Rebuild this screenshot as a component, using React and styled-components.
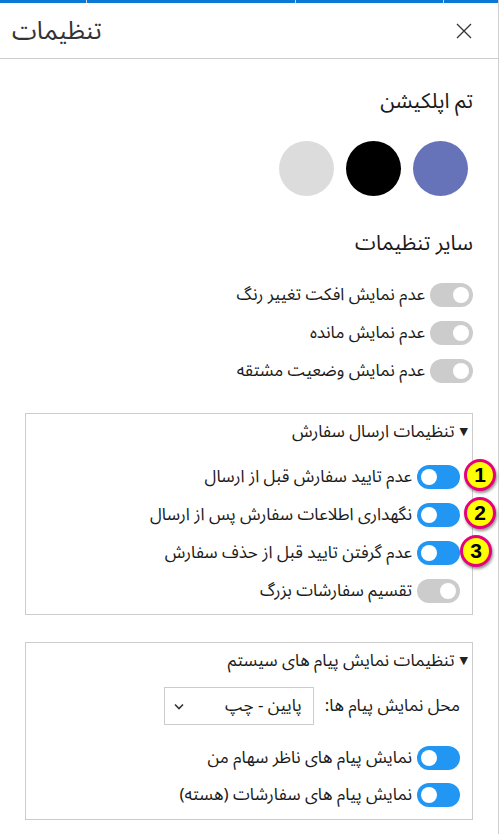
import React from "react";
import styled, { createGlobalStyle } from "styled-components";

const GlobalStyle = createGlobalStyle`
  html, body { margin: 0; padding: 0; background: #fff; }
  body { font-family: "Noto Sans Arabic", "DejaVu Sans", "Noto Sans", sans-serif; color: #1a1a1a; }
  * { box-sizing: border-box; }
`;

const Panel = styled.div`
  width: 499px;
  min-height: 834px;
  border-right: 1px solid #cfcfcf;
  background: #fff;
`;

const TopBar = styled.div`
  display: flex;
  height: 3px;
  background: #0a78d4;
`;

const TopSeg = styled.div`
  width: ${(p) => p.w}px;
  height: 100%;
  border-left: ${(p) => (p.first ? "none" : "1px solid #c9d6e6")};
`;

const Header = styled.div`
  display: flex;
  justify-content: space-between;
  align-items: center;
  height: 56px;
  padding: 0 26px 0 12px;
  border-bottom: 1px solid #cccccc;
`;

const Title = styled.div`
  direction: rtl;
  font-size: 25px;
  color: #333;
`;

const CloseBtn = styled.button`
  border: none;
  background: none;
  padding: 0;
  width: 16px;
  height: 16px;
  display: flex;
  align-items: center;
  justify-content: center;
  cursor: pointer;
`;

const Content = styled.div`
  direction: rtl;
  padding: 28px 25px 0 25px;
  display: flex;
  flex-direction: column;
`;

const Heading = styled.div`
  font-size: 21px;
  line-height: 28px;
  color: #1a1a1a;
  margin-top: ${(p) => p.mt || 0}px;
`;

const ThemeRow = styled.div`
  display: flex;
  gap: 12px;
  padding-right: 5px;
  margin-top: 26px;
`;

const ThemeDot = styled.div`
  width: 55px;
  height: 55px;
  border-radius: 50%;
  background: ${(p) => p.color};
`;

const RowList = styled.div`
  display: flex;
  flex-direction: column;
  gap: ${(p) => p.gap || 14}px;
  margin-top: ${(p) => p.mt || 0}px;
`;

const Row = styled.div`
  position: relative;
  display: flex;
  align-items: center;
  gap: 5px;
  height: 24px;
`;

const Toggle = styled.div`
  position: relative;
  width: 43px;
  height: 24px;
  border-radius: 12px;
  background: ${(p) => (p.on ? "#2196f3" : "#cccccc")};
  flex-shrink: 0;
  &::after {
    content: "";
    position: absolute;
    top: 4px;
    ${(p) => (p.on ? "right: 23px;" : "right: 4px;")}
    width: 16px;
    height: 16px;
    border-radius: 50%;
    background: #fff;
  }
`;

const Label = styled.span`
  font-size: 17px;
  line-height: 24px;
  color: #1a1a1a;
  white-space: nowrap;
`;

const Box = styled.div`
  border: 1px solid #cccccc;
  margin-top: ${(p) => p.mt}px;
  padding: ${(p) => p.pad};
  display: flex;
  flex-direction: column;
`;

const Summary = styled.div`
  display: flex;
  align-items: center;
  gap: 5px;
  margin-right: -8px;
  font-size: 17px;
  line-height: 22px;
  color: #1a1a1a;
`;

const Caret = styled.span`
  font-size: 11px;
  color: #222;
`;

const Badge = styled.div`
  position: absolute;
  top: -6px;
  right: ${(p) => p.r}px;
  width: 32px;
  height: 32px;
  border-radius: 50%;
  background: #ffff00;
  border: 3px solid #e6007e;
  box-shadow: 1px 2px 3px rgba(0, 0, 0, 0.45);
  display: flex;
  align-items: center;
  justify-content: center;
  font-family: "Liberation Sans", Arial, sans-serif;
  font-weight: bold;
  font-size: 21px;
  color: #000;
`;

const SelectRow = styled.div`
  display: flex;
  align-items: center;
  gap: 11px;
  margin-top: 15px;
`;

const SelectBox = styled.div`
  width: 150px;
  height: 38px;
  border: 1px solid #cccccc;
  display: flex;
  align-items: center;
  justify-content: space-between;
  padding: 0 11px 0 9px;
  font-size: 17px;
  color: #1a1a1a;
`;

const Chevron = () => (
  <svg width="10" height="7" viewBox="0 0 10 7">
    <path d="M1 1.5 L5 5.5 L9 1.5" fill="none" stroke="#333" strokeWidth="1.6" />
  </svg>
);

const XIcon = () => (
  <svg width="16" height="16" viewBox="0 0 16 16">
    <path d="M1 1 L15 15 M15 1 L1 15" stroke="#333" strokeWidth="1.3" />
  </svg>
);

const ToggleRow = ({ on, label, badge, badgeR }) => (
  <Row>
    <Toggle on={on} />
    <Label>{label}</Label>
    {badge && <Badge r={badgeR}>{badge}</Badge>}
  </Row>
);

export default function App() {
  return (
    <>
      <GlobalStyle />
      <Panel>
        <TopBar>
          <TopSeg first w={86} />
          <TopSeg w={209} />
          <TopSeg w={148} />
          <TopSeg w={55} />
        </TopBar>
        <Header>
          <Title>تنظیمات</Title>
          <CloseBtn>
            <XIcon />
          </CloseBtn>
        </Header>
        <Content>
          <Heading>تم اپلکیشن</Heading>
          <ThemeRow>
            <ThemeDot color="#6673b8" />
            <ThemeDot color="#000000" />
            <ThemeDot color="#dcdcdc" />
          </ThemeRow>
          <Heading mt={33}>سایر تنظیمات</Heading>
          <RowList mt={26} gap={14}>
            <ToggleRow label="عدم نمایش افکت تغییر رنگ" />
            <ToggleRow label="عدم نمایش مانده" />
            <ToggleRow label="عدم نمایش وضعیت مشتقه" />
          </RowList>

          <Box mt={30} pad="7px 12px 11px 12px">
            <Summary>
              <Caret>▼</Caret>
              <span>تنظیمات ارسال سفارش</span>
            </Summary>
            <RowList mt={22} gap={14}>
              <ToggleRow on label="عدم تایید سفارش قبل از ارسال" badge="1" badgeR={-36} />
              <ToggleRow on label="نگهداری اطلاعات سفارش پس از ارسال" badge="2" badgeR={-36} />
              <ToggleRow on label="عدم گرفتن تایید قبل از حذف سفارش" badge="3" badgeR={-32} />
              <ToggleRow label="تقسیم سفارشات بزرگ" />
            </RowList>
          </Box>

          <Box mt={27} pad="7px 12px 12px 12px">
            <Summary>
              <Caret>▼</Caret>
              <span>تنظیمات نمایش پیام های سیستم</span>
            </Summary>
            <SelectRow>
              <Label>محل نمایش پیام ها:</Label>
              <SelectBox>
                <span>پایین - چپ</span>
                <Chevron />
              </SelectBox>
            </SelectRow>
            <RowList mt={21} gap={13}>
              <ToggleRow on label="نمایش پیام های ناظر سهام من" />
              <ToggleRow on label="نمایش پیام های سفارشات (هسته)" />
            </RowList>
          </Box>
        </Content>
      </Panel>
    </>
  );
}
